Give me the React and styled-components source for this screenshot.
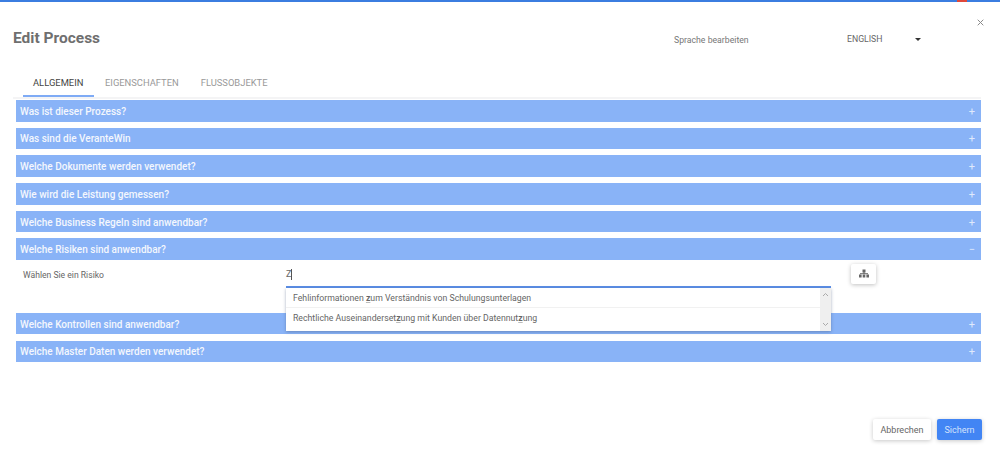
import React from "react";
import styled, { createGlobalStyle } from "styled-components";

const Global = createGlobalStyle`
  html, body { margin: 0; padding: 0; background: #fff; overflow: hidden; }
  body { font-family: Roboto, "Liberation Sans", sans-serif; }
`;
const Page = styled.div`
  position: relative; width: 1000px; height: 449px; background: #fff; overflow: hidden;
  display: flex; flex-direction: column;
`;
const TopBar = styled.div`
  height: 2px; flex: none; background: #3b7de0; position: relative;
`;
const RedMark = styled.span`
  position: absolute; left: 957px; top: 0; width: 10px; height: 2px; background: #e0483a;
`;
const Close = styled.button`
  position: absolute; left: 974px; top: 16px; width: 12px; height: 12px; padding: 0;
  border: 0; background: none; color: #8a8a8a; display: flex; align-items: center; justify-content: center;
`;
const Header = styled.header`
  height: 70px; flex: none; display: flex; align-items: flex-start;
`;
const Title = styled.h1`
  margin: 26px 0 0 13px; width: 661px; font-size: 15.5px; line-height: 20px; font-weight: 700; color: #6f6f6f;
`;
const LangLabel = styled.span`
  margin-top: 33px; width: 173px; font-size: 8.7px; line-height: 11px; color: #777;
`;
const LangSelect = styled.div`
  margin-top: 32px; width: 74px; display: flex; align-items: center; justify-content: space-between;
  font-size: 8.7px; line-height: 11px; color: #666;
`;
const Caret = styled.i`
  width: 0; height: 0; border: 3px solid transparent; border-top: 3px solid #333; border-bottom: 0;
`;
const Tabs = styled.nav`
  height: 25px; margin: 0 19px 0 13px; flex: none; display: flex; padding-left: 10px;
  border-bottom: 2px solid #f4f4f5; box-sizing: content-box;
`;
const Tab = styled.div`
  height: 25px; box-sizing: border-box; padding: 5px 10px 0; margin-right: ${p => p.$gap || 0}px;
  min-width: ${p => p.$active ? "71px" : "0"};
  font-size: 9.4px; line-height: 12px; color: ${p => p.$active ? "#444" : "#999"};
  border-bottom: 2px solid ${p => p.$active ? "#7fabf5" : "transparent"};
`;
const Accordion = styled.div`
  margin: 1px 19px 0 16px; display: flex; flex-direction: column;
`;
const Section = styled.div`
  margin-bottom: 6.2px;
`;
const Bar = styled.div`
  height: 21.5px; box-sizing: border-box; display: flex; align-items: center; justify-content: space-between;
  padding: 1px 6px 0 4px;
  background: #89b3f7; color: #f4f7fd; font-size: 10px; font-weight: 500;
`;
const Sign = styled.span`
  font-size: 11px; font-weight: 400; color: #dfe9fc; line-height: 1;
`;
const Body = styled.div`
  height: 46.8px; display: flex; align-items: flex-start;
`;
const FieldLabel = styled.label`
  margin: 10px 0 0 7px; width: 263px; font-size: 8.6px; line-height: 11px; color: #666;
`;
const Field = styled.div`
  position: relative; width: 545px; height: 26px; border-bottom: 2px solid #5b8ee6;
  box-sizing: content-box;
`;
const Typed = styled.div`
  padding-top: 9px; font-size: 9px; line-height: 11px; color: #666;
`;
const Cursor = styled.span`
  display: inline-block; width: 1px; height: 11px; background: #555; vertical-align: top;
`;
const Options = styled.div`
  position: absolute; left: 0; top: 28px; width: 545px; height: 43px; display: flex; background: #fff; z-index: 2;
  box-shadow: 0 1px 3px rgba(60,80,120,.45);
`;
const OptionList = styled.div`
  flex: 1; display: flex; flex-direction: column;
`;
const Option = styled.div`
  height: 19.5px; padding: 0 7px; display: flex; align-items: center; font-size: 8.72px; color: #666;
  & + & { border-top: 1px solid #f1f1f1; }
  b { font-weight: 700; text-decoration: underline; text-decoration-color: #bbb; }
`;
const Scroll = styled.div`
  width: 11px; background: #efefef; display: flex; flex-direction: column; align-items: center; justify-content: space-between;
  padding: 4px 0; box-sizing: border-box; color: #aaa;
`;
const IconButton = styled.button`
  margin: 4px 0 0 20px; width: 25px; height: 20px; padding: 0; border: 0; border-radius: 2px; background: #fff;
  display: flex; align-items: center; justify-content: center;
  box-shadow: 0 1px 4px rgba(0,0,0,.25);
`;
const Footer = styled.footer`
  position: absolute; right: 18px; top: 419px; display: flex; gap: 6px;
`;
const Button = styled.button`
  height: 21px; padding: 0; width: ${p => p.$w}px; border: 0; border-radius: 2px; font: 400 9px Roboto, sans-serif;
  background: ${p => p.$primary ? "#4285f4" : "#fff"}; color: ${p => p.$primary ? "#d5e3fc" : "#666"};
  box-shadow: 0 1px 4px rgba(0,0,0,.22);
`;

const Chevron = ({ up }) => (
  <svg width="7" height="5" viewBox="0 0 7 5" fill="none" stroke="currentColor" strokeWidth="1">
    <path d={up ? "M1 4l2.5-2.5L6 4" : "M1 1l2.5 2.5L6 1"} />
  </svg>
);
const Hierarchy = () => (
  <svg width="10" height="9" viewBox="0 0 10 9" fill="#666">
    <rect x="3.5" y="0.5" width="3" height="3" />
    <rect x="4.5" y="3" width="1" height="2" />
    <rect x="1" y="4.2" width="8" height="1" />
    <rect x="0" y="5.5" width="2.6" height="3" />
    <rect x="3.7" y="5.5" width="2.6" height="3" />
    <rect x="7.4" y="5.5" width="2.6" height="3" />
  </svg>
);
const X = () => (
  <svg width="7" height="7" viewBox="0 0 7 7" stroke="currentColor" strokeWidth="1"><path d="M.7.7l5.6 5.6M6.3.7L.7 6.3" /></svg>
);

const before = ["Was ist dieser Prozess?", "Was sind die VeranteWin", "Welche Dokumente werden verwendet?", "Wie wird die Leistung gemessen?", "Welche Business Regeln sind anwendbar?"];
const after = ["Welche Kontrollen sind anwendbar?", "Welche Master Daten werden verwendet?"];

export default function App() {
  return (
    <Page>
      <Global />
      <TopBar><RedMark /></TopBar>
      <Close aria-label="Schließen"><X /></Close>
      <Header>
        <Title>Edit Process</Title>
        <LangLabel>Sprache bearbeiten</LangLabel>
        <LangSelect>ENGLISH<Caret /></LangSelect>
      </Header>
      <Tabs>
        <Tab $active $gap={1}>ALLGEMEIN</Tab>
        <Tab $gap={2}>EIGENSCHAFTEN</Tab>
        <Tab>FLUSSOBJEKTE</Tab>
      </Tabs>
      <Accordion>
        {before.map(t => <Section key={t}><Bar>{t}<Sign>+</Sign></Bar></Section>)}
        <Section>
          <Bar>Welche Risiken sind anwendbar?<Sign>−</Sign></Bar>
          <Body>
            <FieldLabel>Wählen Sie ein Risiko</FieldLabel>
            <Field>
              <Typed>Z<Cursor /></Typed>
              <Options>
                <OptionList>
                  <Option><span>Fehlinformationen <b>z</b>um Verständnis von Schulungsunterlagen</span></Option>
                  <Option><span>Rechtliche Auseinanderset<b>z</b>ung mit Kunden über Datennut<b>z</b>ung</span></Option>
                </OptionList>
                <Scroll><Chevron up /><Chevron /></Scroll>
              </Options>
            </Field>
            <IconButton aria-label="Hierarchie"><Hierarchy /></IconButton>
          </Body>
        </Section>
        {after.map(t => <Section key={t}><Bar>{t}<Sign>+</Sign></Bar></Section>)}
      </Accordion>
      <Footer>
        <Button $w={58}>Abbrechen</Button>
        <Button $primary $w={45}>Sichern</Button>
      </Footer>
    </Page>
  );
}
